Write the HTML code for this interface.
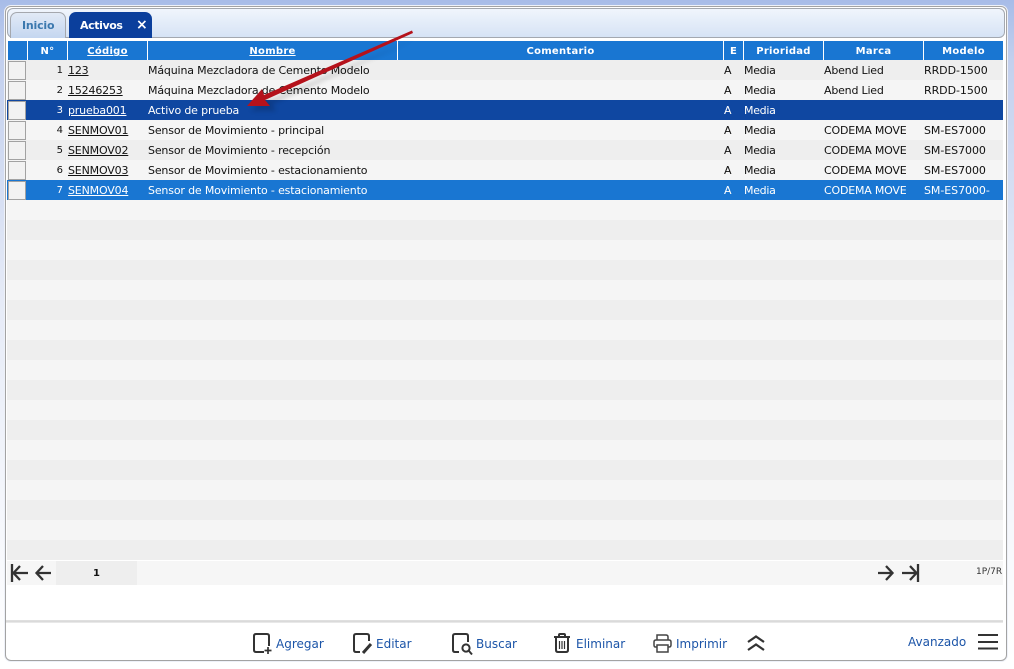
<!DOCTYPE html>
<html><head><meta charset="utf-8"><style>
html,body{margin:0;padding:0}
body{width:1014px;height:669px;position:relative;overflow:hidden;background:linear-gradient(#a7bce8 0,#c3d0ee 60px,#e6ebf7 300px,#fff 660px);font:11px "DejaVu Sans","Liberation Sans",sans-serif;color:#111}
div{position:absolute;box-sizing:border-box}
#frame{left:5px;top:6px;width:1002px;height:655px;background:#fff;border:1px solid #a3a3a3;border-radius:6px;box-shadow:0 0 0 1px #eef1f8}
#tabbar{left:7px;top:8px;width:998px;height:30px;background:linear-gradient(#f0f5fc,#d6e3f5);border:1px solid #a3a8b0;border-radius:6px}
.tab{top:12px;height:26px;border-radius:7px 7px 0 0;font-weight:bold;line-height:27px;white-space:nowrap;letter-spacing:-.4px}
#t1{left:10px;width:56px;background:linear-gradient(#e2eaf6,#c4d6f0);border:1px solid #a5a8ae;border-bottom:0;color:#3b78ae;padding-left:11px;line-height:26px;letter-spacing:-.2px}
#t2{left:69px;width:83px;background:#0b3f9c;color:#fff;padding-left:11px}
#t2 b{position:absolute;left:67px;top:0;font-size:14px}
.h{top:41px;height:19px;background:#1976d2;color:#fff;font-weight:bold;font-size:10px;line-height:21px;text-align:center;letter-spacing:.28px;white-space:nowrap}
.h u{text-underline-offset:1px}
#rows{left:7px;top:60px;width:996px;height:500px;background:repeating-linear-gradient(#eeeeee 0,#eeeeee 20px,#f5f5f5 20px,#f5f5f5 40px)}
.r{left:7px;width:996px;height:20px;line-height:20px;white-space:nowrap;color:#111}
.r div{top:1px;height:19px}
.s1{background:#0f47a1;color:#fff}
.s2{background:#1976d2;color:#fff}
.s0{background:#f5f5f5}
.s3{background:#eee}
.r .cb{left:1px;top:1px;width:18px;height:19px;background:#f2f2f2;border:1px solid #a2a2a2}
.n{left:21px;width:35px;text-align:right;font-size:10px}
.c{left:61px;text-decoration:underline;letter-spacing:-.17px}
.nm{left:141px;letter-spacing:-.16px}
.e{left:717px}.p{left:737px;letter-spacing:-.3px}.m{left:817px;letter-spacing:-.2px}.o{left:917px;letter-spacing:-.06px}
.s1 .c,.s1 .nm{color:#fff}
#pager{left:7px;top:561px;width:996px;height:24px;background:#f6f6f6}
#pg{left:56px;top:561px;width:81px;height:24px;background:#eeeeee;text-align:center;line-height:25px;font-size:10px;font-weight:bold}
#cnt{left:976px;top:567px;font-size:9px;color:#333;white-space:nowrap}
#sep{left:6px;top:620px;width:997px;height:3px;background:linear-gradient(#e2e2e2,#d8d8d8 60%,#f4f4f4)}
.b{top:636px;font-size:12px;color:#1c55a8;line-height:17px;white-space:nowrap}
svg{position:absolute;overflow:visible}
</style></head><body>
<div id="frame"></div>
<div id="tabbar"></div>
<div class="tab" id="t1">Inicio</div>
<div class="tab" id="t2">Activos<b>×</b></div>

<div class="h" style="left:8px;width:19px"></div>
<div class="h" style="left:28px;width:39px">N°</div>
<div class="h" style="left:68px;width:79px"><u>Código</u></div>
<div class="h" style="left:148px;width:249px"><u>Nombre</u></div>
<div class="h" style="left:398px;width:325px">Comentario</div>
<div class="h" style="left:724px;width:19px">E</div>
<div class="h" style="left:744px;width:79px">Prioridad</div>
<div class="h" style="left:824px;width:99px">Marca</div>
<div class="h" style="left:924px;width:79px">Modelo</div>

<div id="rows"></div>
<div class="r s3" style="top:60px"><div class="cb"></div><div class="n">1</div><div class="c">123</div><div class="nm">Máquina Mezcladora de Cemento Modelo</div><div class="e">A</div><div class="p">Media</div><div class="m">Abend Lied</div><div class="o">RRDD-1500</div></div>
<div class="r s0" style="top:80px"><div class="cb"></div><div class="n">2</div><div class="c">15246253</div><div class="nm">Máquina Mezcladora de Cemento Modelo</div><div class="e">A</div><div class="p">Media</div><div class="m">Abend Lied</div><div class="o">RRDD-1500</div></div>
<div class="r s1" style="top:100px"><div class="cb"></div><div class="n">3</div><div class="c">prueba001</div><div class="nm">Activo de prueba</div><div class="e">A</div><div class="p">Media</div></div>
<div class="r s0" style="top:120px"><div class="cb"></div><div class="n">4</div><div class="c">SENMOV01</div><div class="nm">Sensor de Movimiento - principal</div><div class="e">A</div><div class="p">Media</div><div class="m">CODEMA MOVE</div><div class="o">SM-ES7000</div></div>
<div class="r s3" style="top:140px"><div class="cb"></div><div class="n">5</div><div class="c">SENMOV02</div><div class="nm">Sensor de Movimiento - recepción</div><div class="e">A</div><div class="p">Media</div><div class="m">CODEMA MOVE</div><div class="o">SM-ES7000</div></div>
<div class="r s0" style="top:160px"><div class="cb"></div><div class="n">6</div><div class="c">SENMOV03</div><div class="nm">Sensor de Movimiento - estacionamiento</div><div class="e">A</div><div class="p">Media</div><div class="m">CODEMA MOVE</div><div class="o">SM-ES7000</div></div>
<div class="r s2" style="top:180px"><div class="cb"></div><div class="n">7</div><div class="c">SENMOV04</div><div class="nm">Sensor de Movimiento - estacionamiento</div><div class="e">A</div><div class="p">Media</div><div class="m">CODEMA MOVE</div><div class="o">SM-ES7000-</div></div>

<div id="pager"></div>
<div id="pg">1</div>
<svg style="left:0;top:0" width="1014" height="669" fill="none" stroke="#333" stroke-width="2.300">
<!-- pager -->
<path d="M12 564V582M28 573H14M20 566L13.500 573L20 580"/>
<path d="M51 573H37M43 566L36.500 573L43 580"/>
<path d="M878 573H892M886 566L892.500 573L886 580"/>
<path d="M902 573H916M910 566L916.500 573L910 580M918 564V582"/>
<!-- agregar -->
<path d="M264 652H256Q254 652 254 650V636Q254 634 256 634H267Q269 634 269 636V646" stroke-width="2"/>
<path d="M268 647V654M264.500 650.500H271.500" stroke-width="1.700"/>
<!-- editar -->
<path d="M360 652H356Q354 652 354 650V636Q354 634 356 634H367Q369 634 369 636V641" stroke-width="2"/>
<path d="M363 653L371 644" stroke-width="3"/>
<!-- buscar -->
<path d="M459 652H455Q453 652 453 650V636Q453 634 455 634H466Q468 634 468 636V642" stroke-width="2"/>
<circle cx="466" cy="648" r="3.600" stroke-width="2"/><path d="M469 651L472 654.500" stroke-width="2"/>
<!-- eliminar -->
<path d="M554 637H570M559 637V635Q559 634 560 634H564Q565 634 565 635V637" stroke-width="2"/>
<path d="M556 638V650Q556 652 558 652H566Q568 652 568 650V638" stroke-width="2"/>
<path d="M559.500 641V649M562 641V649M564.500 641V649" stroke-width="1.200"/>
<!-- imprimir -->
<path d="M657 640V635H666Q668 635 668 637V640M657 647H655.500Q654 647 654 645V642Q654 640 656 640H669Q671 640 671 642V645Q671 647 669 647H668" stroke-width="1.500" stroke="#444"/>
<path d="M657 645H668V652H657Z" stroke-width="1.500" stroke="#444"/>
<!-- chevrons -->
<path d="M748 642L756 636.500L764 642M748 650L756 644.500L764 650" stroke-width="2.200"/>
<!-- hamburger -->
<path d="M978 635H998M978 642H998M978 648.500H998" stroke-width="2"/>
</svg>
<div id="cnt">1P/7R</div>
<div id="sep"></div>
<div class="b" style="left:276px">Agregar</div>
<div class="b" style="left:376px">Editar</div>
<div class="b" style="left:476px">Buscar</div>
<div class="b" style="left:576px">Eliminar</div>
<div class="b" style="left:676px">Imprimir</div>
<div class="b" style="left:908px;top:634px">Avanzado</div>

<svg style="left:0;top:0" width="1014" height="669">
<path d="M414 33L268 99L272 106L247 106L262 90L265 95Z" fill="#000" opacity=".16" transform="translate(4,5)" style="filter:blur(2.500px)"/>
<path d="M412 30.500L413 33L265 100L270 106L247 106L262 89L264 95Z" fill="#b5121b"/>
</svg>
</body></html>
